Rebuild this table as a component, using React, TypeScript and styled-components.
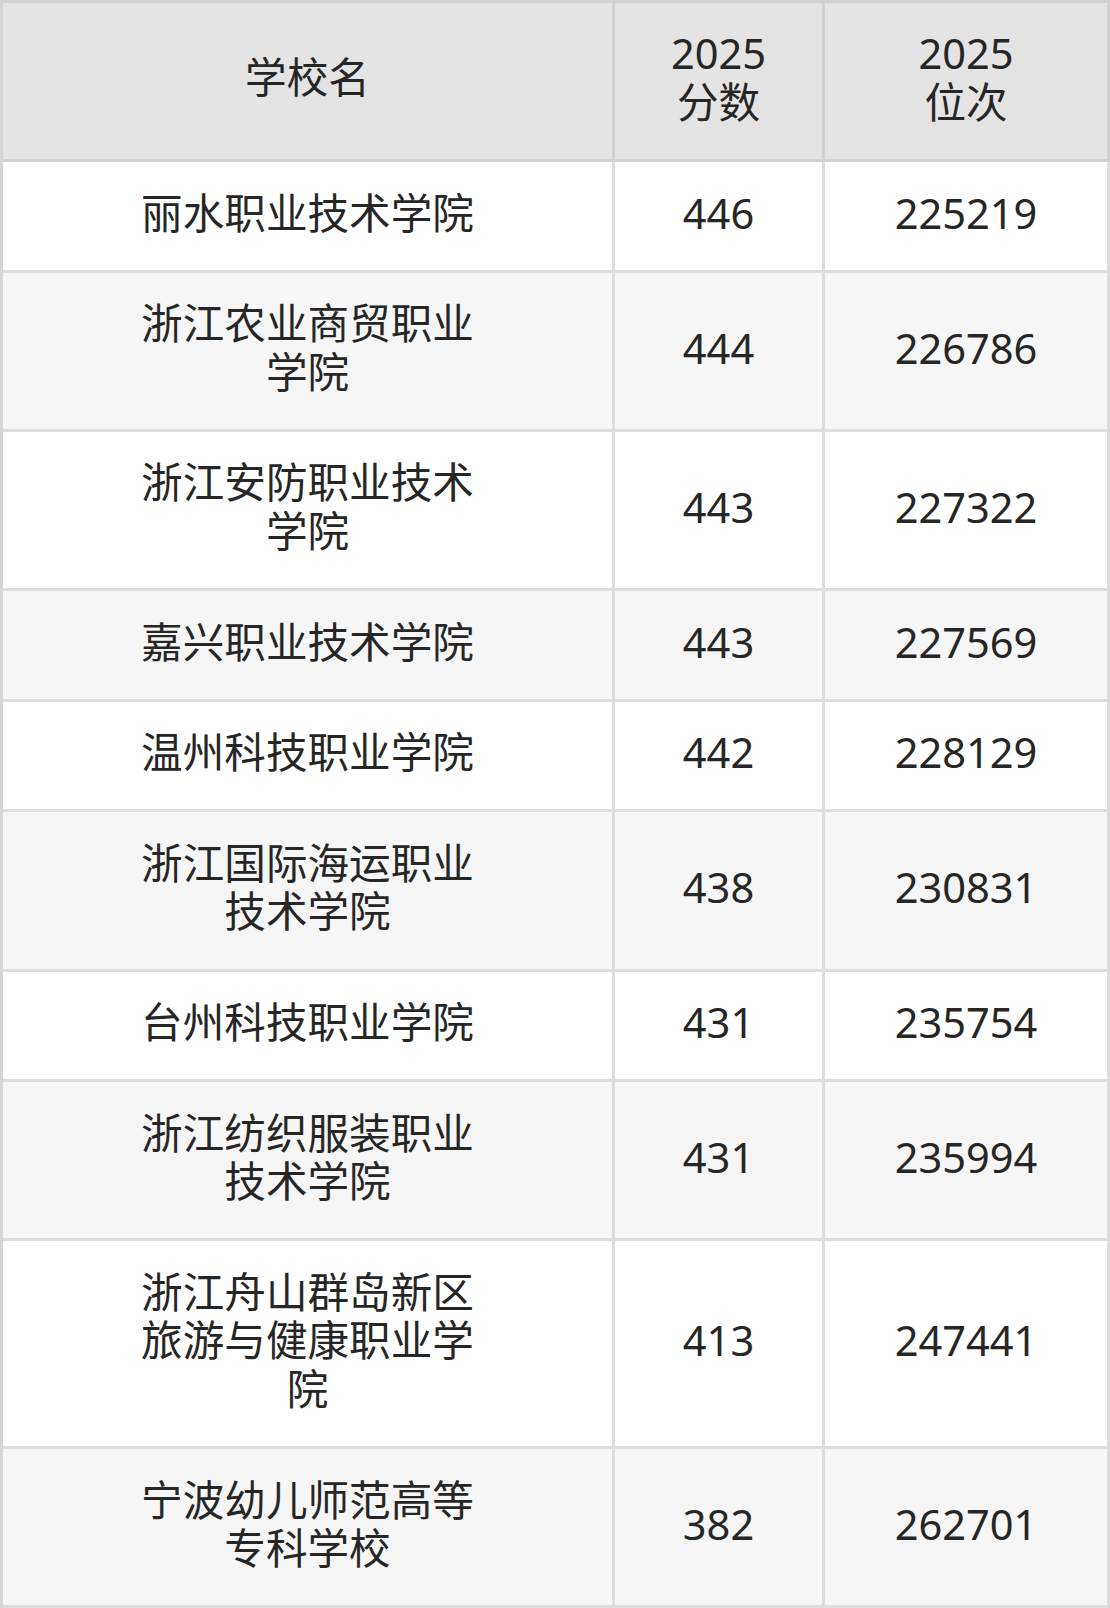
import React from "react";
import styled, { createGlobalStyle } from "styled-components";

const GlobalStyle = createGlobalStyle`
  html, body {
    margin: 0;
    padding: 0;
    background: #ffffff;
  }
  body {
    font-family: "Noto Sans", "Noto Sans CJK SC", sans-serif;
  }
`;

const Table = styled.table`
  width: 1110px;
  table-layout: fixed;
  border-collapse: separate;
  border-spacing: 0;
  border-top: 3px solid #d2d2d2;
  border-left: 3px solid #d6d6d6;
  font-family: "Noto Sans", "Noto Sans CJK SC", sans-serif;
  font-size: 41.6px;
  line-height: 48.6px;
  color: #262626;
`;

const HeadCell = styled.th<{ $w: number }>`
  box-sizing: border-box;
  width: ${(p) => p.$w}px;
  background: #e4e4e4;
  font-weight: 400;
  text-align: center;
  vertical-align: middle;
  padding: 26px 0 33px;
  border-right: 3px solid #d2d2d2;
  border-bottom: 3px solid #d2d2d2;
`;

const Row = styled.tr<{ $alt: boolean }>`
  background: ${(p) => (p.$alt ? "#f6f6f6" : "#ffffff")};
`;

const Cell = styled.td<{ $name?: boolean }>`
  box-sizing: border-box;
  text-align: center;
  vertical-align: middle;
  padding: 26.5px ${(p) => (p.$name ? "130px" : "0")} 32.5px;
  border-right: 3px solid #dddddd;
  border-bottom: 3px solid #dddddd;
`;

const rows: [string, string, string][] = [
  ["丽水职业技术学院", "446", "225219"],
  ["浙江农业商贸职业学院", "444", "226786"],
  ["浙江安防职业技术学院", "443", "227322"],
  ["嘉兴职业技术学院", "443", "227569"],
  ["温州科技职业学院", "442", "228129"],
  ["浙江国际海运职业技术学院", "438", "230831"],
  ["台州科技职业学院", "431", "235754"],
  ["浙江纺织服装职业技术学院", "431", "235994"],
  ["浙江舟山群岛新区旅游与健康职业学院", "413", "247441"],
  ["宁波幼儿师范高等专科学校", "382", "262701"],
];

export default function App() {
  return (
    <>
      <GlobalStyle />
      <Table>
        <thead>
          <tr>
            <HeadCell $w={612}>学校名</HeadCell>
            <HeadCell $w={210}>
              2025
              <br />
              分数
            </HeadCell>
            <HeadCell $w={285}>
              2025
              <br />
              位次
            </HeadCell>
          </tr>
        </thead>
        <tbody>
          {rows.map(([name, score, rank], i) => (
            <Row key={name} $alt={i % 2 === 1}>
              <Cell $name>{name}</Cell>
              <Cell>{score}</Cell>
              <Cell>{rank}</Cell>
            </Row>
          ))}
        </tbody>
      </Table>
    </>
  );
}
